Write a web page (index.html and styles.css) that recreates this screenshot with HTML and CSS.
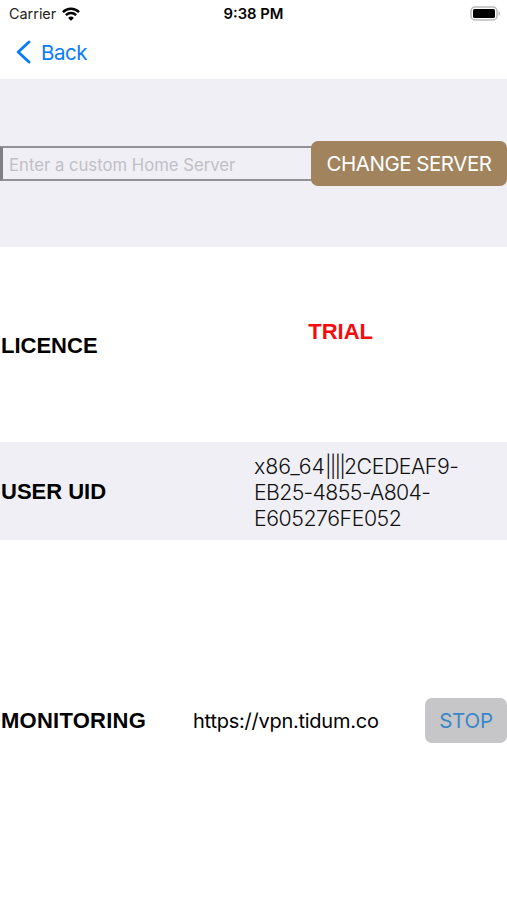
FILE: index.html
```html
<!DOCTYPE html>
<html lang="en">

<head>
    <meta charset="UTF-8">
    <meta name="viewport" content="width=device-width, initial-scale=1.0">
    <title>Settings</title>
    <link rel="stylesheet" href="styles.css">
</head>

<body>
    <div class="container">
        <div class="status">
            <div class="carrier">
                <span class="carrier-name">Carrier</span>
                <svg class="wifi" width="18" height="14" viewBox="0 0 18 14" fill="none" stroke="#000" stroke-width="2.5">
                    <path d="M1 5.1a11.4 11.4 0 0 1 16 0"/>
                    <path d="M3.9 8.2a7.3 7.3 0 0 1 10.2 0"/>
                    <path fill="#000" stroke="none" d="M9 13.8 6.1 10.9a4.1 4.1 0 0 1 5.8 0z"/>
                </svg>
            </div>
            <div class="clock">9:38 PM</div>
            <svg class="battery" width="31" height="15" viewBox="0 0 31 15">
                <rect x="1" y="1" width="26" height="13" rx="4" fill="#fff" stroke="#b9b9b9" stroke-width="1.5"/>
                <rect x="3" y="3" width="22" height="9" rx="1.5" fill="#000"/>
                <path fill="#b9b9b9" d="M28.5 5.2c2 .8 2 3.8 0 4.6z"/>
            </svg>
        </div>
        <div class="nav">
            <svg class="arrow" width="15" height="24" viewBox="0 0 15 24" fill="none" stroke="#0a7aff" stroke-width="2.9" stroke-linecap="round" stroke-linejoin="round">
                <path d="M13 2 2.2 12l10.8 10"/>
            </svg>
            <span class="nav-back">Back</span>
        </div>
        <div class="row server">
            <input class="server-input" type="text" placeholder="Enter a custom Home Server">
            <button class="btn server-btn">CHANGE SERVER</button>
        </div>
        <div class="row licence">
            <div class="label">LICENCE</div>
            <div class="licence-value">TRIAL</div>
        </div>
        <div class="row user">
            <div class="label">USER UID</div>
            <div class="uid">
                <div><span class="arch">x86_64</span><span class="bars">||||</span>2CEDEAF9-</div>
                <div class="uid-mid">EB25-4855-A804-</div>
                <div>E605276FE052</div>
            </div>
        </div>
        <div class="row monitoring">
            <div class="label">MONITORING</div>
            <div class="url">https://vpn.tidum.co</div>
            <button class="btn stop-btn">STOP</button>
        </div>
    </div>
</body>

</html>
```

FILE: styles.css
```css
body{
    margin: 0;
    padding: 0;
    background-color: #fff;
    font-family: Inter, 'Liberation Sans', sans-serif;
    color: #000;
}
* {
    box-sizing: border-box;
}
.container{
    height: 100vh;
    display: flex;
    flex-direction: column;
    overflow: hidden;
    white-space: nowrap;
}
.status{
    height: 27px;
    display: grid;
    grid-template-columns: 1fr auto 1fr;
    align-items: center;
    padding: 0 6px 0 9px;
}
.carrier{
    display: flex;
    align-items: center;
    gap: 6px;
    color: #222;
    font-size: 14.4px;
}
.clock{
    font-weight: 600;
    font-size: 14.8px;
    margin-right: 3px;
}
.battery{
    justify-self: end;
}

.nav{
    height: 52px;
    display: flex;
    align-items: center;
    gap: 10px;
    padding: 0 0 2px 16px;
    color: #0a7aff;
}
.nav-back{
    font-size: 20.5px;
    letter-spacing: -0.5px;
}

.row{
    display: flex;
    align-items: center;
}
.label{
    font-family: 'Liberation Sans', Arial, sans-serif;
    font-size: 22px;
    font-weight: bold;
    padding: 2px 0 0 1px;
}
.btn{
    height: 45px;
    border: none;
    border-radius: 7px;
    padding: 0;
    font-family: inherit;
    font-size: 20.5px;
    letter-spacing: -0.48px;
}

.server{
    height: 168px;
    background-color: #f0eff5;
}
.server-input{
    width: 312px;
    height: 35px;
    border: 2px solid #929196;
    border-left: 3px solid #808084;
    border-right-width: 1px;
    border-radius: 0;
    background-color: transparent;
    padding: 4px 0 0 6px;
    font-family: inherit;
    font-size: 16.7px;
}
.server-input::placeholder{
    color: #c0bfc5;
}
.server-btn{
    width: 196px;
    margin-left: -1px;
    background-color: #a1835d;
    color: #fff;
}

.licence{
    height: 195px;
}
.licence-value{
    margin: 0 134px 25px auto;
    font-family: 'Liberation Sans', Arial, sans-serif;
    font-size: 22px;
    font-weight: bold;
    color: #f80b0b;
}

.user{
    height: 98px;
    background-color: #f0eff5;
}
.uid{
    width: 253px;
    margin-left: auto;
    padding-top: 2px;
    font-size: 21.3px;
    font-weight: 300;
    line-height: 26px;
    letter-spacing: -0.45px;
    color: #111;
}
.arch{
    letter-spacing: 0;
}
.bars{
    letter-spacing: -1.9px;
}
.uid-mid{
    letter-spacing: -0.65px;
}

.monitoring{
    height: 360px;
}
.monitoring .label{
    width: 193px;
    letter-spacing: 0.25px;
}
.url{
    padding-top: 1px;
    font-size: 20px;
    letter-spacing: -0.25px;
}
.stop-btn{
    width: 82px;
    margin-left: auto;
    letter-spacing: -0.2px;
    background-color: #c6c6c8;
    color: #3987c9;
}
```
